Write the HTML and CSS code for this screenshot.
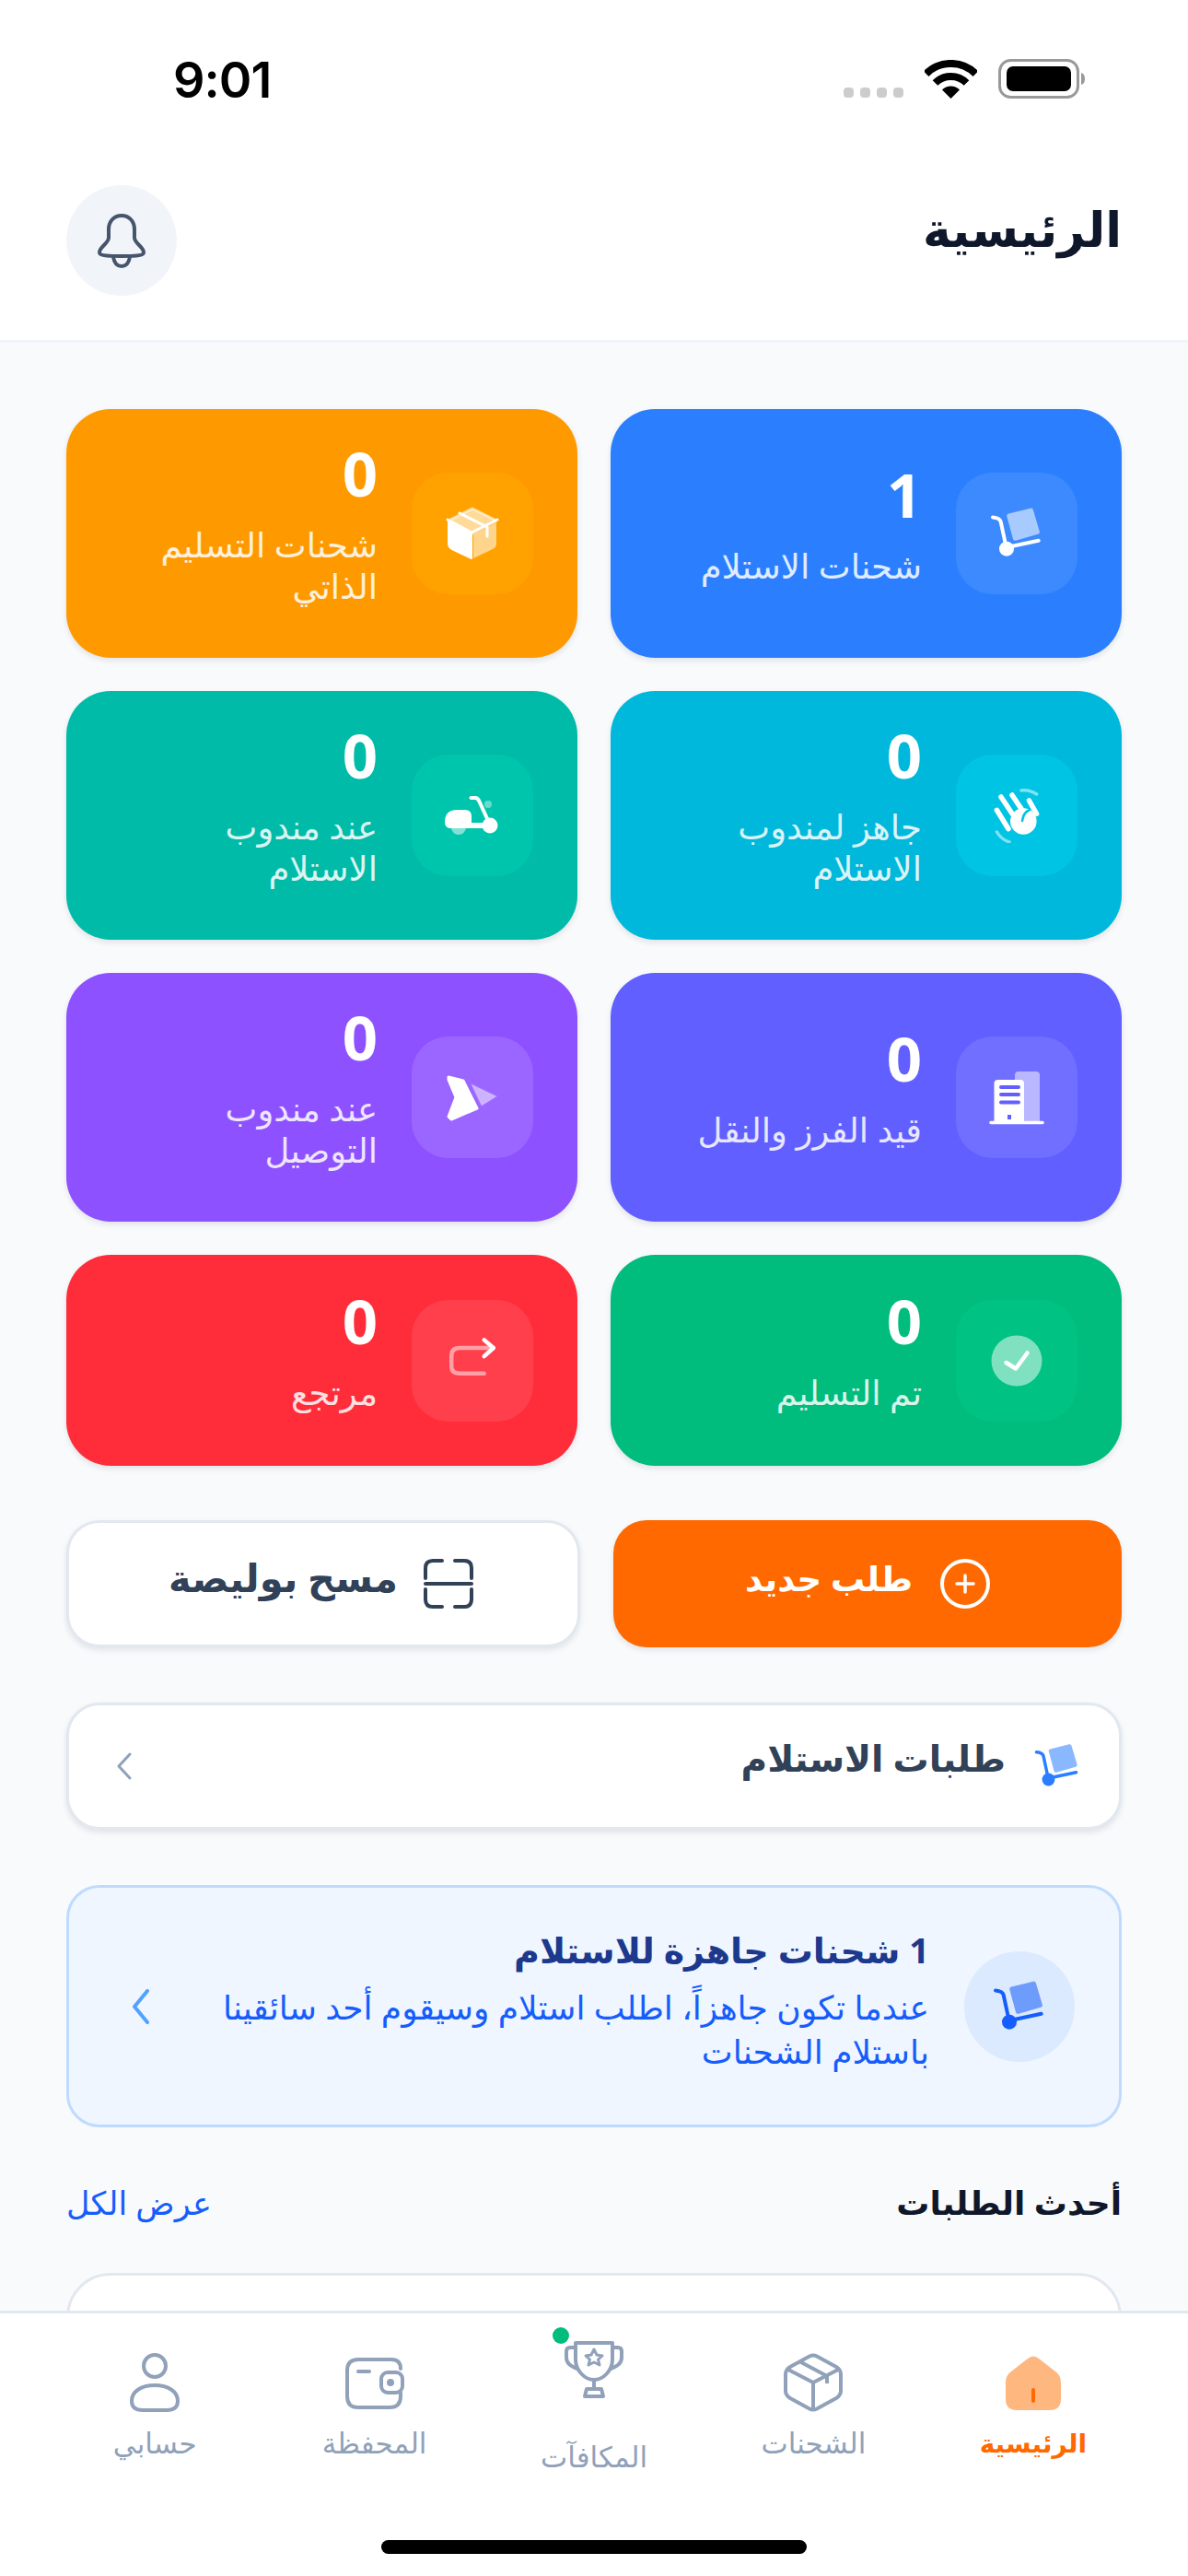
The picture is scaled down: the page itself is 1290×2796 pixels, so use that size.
FILE: index.html
```html
<!DOCTYPE html>
<html lang="ar" dir="rtl">
  <head>
    <meta charset="UTF-8" />
    <meta name="viewport" content="width=device-width, initial-scale=1.0" />
    <title>الرئيسية</title>
    <link rel="stylesheet" href="styles.css">
  </head>
  <body>
    <!-- Shared cart icon -->
    <svg class="defs" width="0" height="0">
      <symbol id="icon-cart" viewBox="0 0 60 60">
        <path class="duo" d="M21.8 11 45.5 5.1 52.4 28.4 28.4 35.3Z" fill="currentColor" stroke="currentColor" stroke-width="5" stroke-linejoin="round" />
        <path d="M4 12.5c4 .4 7.6 1 8.6 4.5L19 46.7M22 44.5l31.7-6.7" fill="none" stroke="currentColor" stroke-width="4" stroke-linecap="round" />
        <circle cx="19" cy="46.7" r="8" fill="currentColor" />
      </symbol>
    </svg>

    <div class="screen">
      <header class="head">
        <div class="status">
          <span class="time">9:01</span>
          <div class="status-icons">
            <div class="signal"><i></i><i></i><i></i><i></i></div>
            <svg width="57" height="42" viewBox="0 0 57 42">
              <path d="M1.6 15.1A38 38 0 0 1 55.4 15.1M11.5 25A24 24 0 0 1 45.5 25" fill="none" stroke="#000" stroke-width="8" />
              <path d="M28.5 42 19 32.5A13.4 13.4 0 0 1 38 32.5Z" fill="#000" />
            </svg>
            <svg width="94" height="43" viewBox="0 0 94 43">
              <rect x="1.5" y="1.5" width="85" height="40" rx="12" fill="none" stroke="#999" stroke-width="3" />
              <rect x="9" y="8" width="70" height="27" rx="7" fill="#000" />
              <path d="M90 15c2.500 .5 4 3 4 6.500s-1.500 6-4 6.500z" fill="#999" />
            </svg>
          </div>
        </div>
        <div class="topbar">
          <h1>الرئيسية</h1>
          <button class="bell">
            <svg width="60" height="60" viewBox="0 0 60 60" fill="none" stroke="#45556c" stroke-width="4">
              <path d="M30 3c-9 0-14 7-14 15v9c0 6-10 10-10 16 0 3 5 4 24 4s24-1 24-4c0-6-10-10-10-16v-9c0-8-5-15-14-15z" />
              <path d="M21 48c1 6 4 10 9 10s8-4 9-10" />
            </svg>
          </button>
        </div>
      </header>

      <main class="content">
        <section class="stats">
          <div class="stat stat-blue">
            <div class="stat-icon">
              <svg width="60" height="60"><use href="#icon-cart" /></svg>
            </div>
            <div class="stat-text">
              <div class="stat-num">1</div>
              <div class="stat-label">شحنات الاستلام</div>
            </div>
          </div>
          <div class="stat stat-amber">
            <div class="stat-icon">
              <svg width="60" height="60" viewBox="0 0 60 60" stroke-linejoin="round">
                <path d="M30 3 56 16 30 30 4 16Z" fill="#fff" fill-opacity=".6" stroke="#fff" stroke-opacity=".6" stroke-width="3" />
                <path d="M4 18 29 31V57L8 47Q4 45 4 41Z" fill="#fff" stroke="#fff" stroke-width="2" />
                <path d="M56 18 31 31V57L52 47Q56 45 56 41Z" fill="#fff" fill-opacity=".55" />
                <path d="M16 8 46 23V33M3 15 29 29 57 15" fill="none" stroke="#fff" stroke-width="3" stroke-linecap="round" />
              </svg>
            </div>
            <div class="stat-text">
              <div class="stat-num">0</div>
              <div class="stat-label">شحنات التسليم الذاتي</div>
            </div>
          </div>
          <div class="stat stat-cyan">
            <div class="stat-icon">
              <svg width="60" height="60" viewBox="0 0 60 60" fill="none" stroke="#fff" stroke-linecap="round">
                <circle cx="37.300" cy="36.500" r="14.300" fill="#fff" stroke="none" />
                <path d="M8.400 24.300 21 44.700M13 10 29 34M25 8 37.300 26.400M43.500 14 51.600 28.400" stroke-width="5.500" />
                <path d="M35 3Q43 1.500 51.600 7M8.400 48Q13 56 22 59" stroke-width="3.500" stroke-opacity=".5" />
                <path d="M44 24Q37 27 36 36" stroke="#00c4e4" stroke-width="2.500" />
              </svg>
            </div>
            <div class="stat-text">
              <div class="stat-num">0</div>
              <div class="stat-label">جاهز لمندوب الاستلام</div>
            </div>
          </div>
          <div class="stat stat-teal">
            <div class="stat-icon">
              <svg width="60" height="60" viewBox="0 0 60 60">
                <circle cx="15" cy="43" r="8" fill="#fff" fill-opacity=".5" />
                <circle cx="47" cy="18" r="4" fill="#fff" fill-opacity=".4" />
                <path d="M0 37Q0 24 14 24H22Q29 24 29 31V38H49V44H6Q0 44 0 37Z" fill="#fff" />
                <path d="M48.500 39 37.500 15Q36 11 33 11H28.500" fill="none" stroke="#fff" stroke-width="4" stroke-linecap="round" />
                <circle cx="49" cy="41" r="8.500" fill="#fff" />
              </svg>
            </div>
            <div class="stat-text">
              <div class="stat-num">0</div>
              <div class="stat-label">عند مندوب الاستلام</div>
            </div>
          </div>
          <div class="stat stat-indigo">
            <div class="stat-icon">
              <svg width="60" height="60" viewBox="0 0 60 60">
                <path d="M28 6Q28 2 32 2H51Q55 2 55 6V57H28Z" fill="#fff" fill-opacity=".5" />
                <path d="M5.500 15Q5.500 11 9.500 11H34Q38 11 38 15V57H5.500Z" fill="#fff" />
                <path d="M13 19H32M13 27H32M13 35.500H32" stroke="#615fff" stroke-width="4" stroke-linecap="round" />
                <path d="M22 54V49" stroke="#615fff" stroke-width="4" />
                <path d="M2 57.500H58" stroke="#fff" stroke-width="3.500" stroke-linecap="round" />
              </svg>
            </div>
            <div class="stat-text">
              <div class="stat-num">0</div>
              <div class="stat-label">قيد الفرز والنقل</div>
            </div>
          </div>
          <div class="stat stat-violet">
            <div class="stat-icon">
              <svg width="60" height="60" viewBox="0 0 60 60" stroke-linejoin="round">
                <path d="M4 8 20 12 35 42 7 54 4 51 12 30 4 11Z" fill="#fff" stroke="#fff" stroke-width="3" />
                <path d="M29 16 56 29 40 39Z" fill="#fff" fill-opacity=".5" stroke="#fff" stroke-opacity=".1" stroke-width="2" />
              </svg>
            </div>
            <div class="stat-text">
              <div class="stat-num">0</div>
              <div class="stat-label">عند مندوب التوصيل</div>
            </div>
          </div>
          <div class="stat stat-green">
            <div class="stat-icon">
              <svg width="60" height="60" viewBox="0 0 60 60" fill="none">
                <circle cx="30" cy="30" r="27.500" fill="#fff" fill-opacity=".5" />
                <path d="M18.500 32 29 38.500 41.500 21.500" stroke="#fff" stroke-width="4.500" stroke-linecap="round" stroke-linejoin="round" />
              </svg>
            </div>
            <div class="stat-text">
              <div class="stat-num">0</div>
              <div class="stat-label">تم التسليم</div>
            </div>
          </div>
          <div class="stat stat-red">
            <div class="stat-icon">
              <svg width="60" height="60" viewBox="0 0 60 60" fill="none" stroke="#fff" stroke-width="4.500" stroke-linecap="round" stroke-linejoin="round">
                <path d="M42.700 43.700H16.200Q7.200 43.700 7.200 36V25Q7.200 16 16.200 16H52.800" stroke-opacity=".5" />
                <path d="M42.700 7.400 52.800 16 42.700 25.200" />
              </svg>
            </div>
            <div class="stat-text">
              <div class="stat-num">0</div>
              <div class="stat-label">مرتجع</div>
            </div>
          </div>
        </section>

        <section class="actions">
          <button class="action action-main">
            <svg width="54" height="54" viewBox="0 0 54 54" fill="none" stroke="#fff" stroke-linecap="round">
              <circle cx="27" cy="27" r="25" stroke-width="4" />
              <path d="M27 18V36M18 27H36" stroke-width="3.500" />
            </svg>
            <span>طلب جديد</span>
          </button>
          <button class="action action-scan">
            <svg width="54" height="54" viewBox="0 0 54 54" fill="none" stroke="#314158" stroke-width="4" stroke-linecap="round">
              <path d="M2 21V10Q2 2 10 2H20M34 2H44Q52 2 52 10V21M2 33V44Q2 52 10 52H20M34 52H44Q52 52 52 44V33" />
              <path d="M2 27H52" />
            </svg>
            <span>مسح بوليصة</span>
          </button>
        </section>

        <a class="pickup-row">
          <svg class="cart-blue" width="52" height="52"><use href="#icon-cart" /></svg>
          <span class="pickup-title">طلبات الاستلام</span>
          <svg class="chev" width="16" height="30" viewBox="0 0 16 30" fill="none" stroke="#90a1b9" stroke-width="3" stroke-linecap="round" stroke-linejoin="round">
            <path d="M14 2 2 15 14 28" />
          </svg>
        </a>

        <section class="banner">
          <div class="banner-icon">
            <svg class="cart-deep" width="60" height="60"><use href="#icon-cart" /></svg>
          </div>
          <div class="banner-text">
            <div class="banner-title">1 شحنات جاهزة للاستلام</div>
            <div class="banner-sub">عندما تكون جاهزاً، اطلب استلام وسيقوم أحد سائقينا باستلام الشحنات</div>
          </div>
          <svg class="chev" width="18" height="38" viewBox="0 0 18 38" fill="none" stroke="#51a2ff" stroke-width="4" stroke-linecap="round" stroke-linejoin="round">
            <path d="M16 2 2 19 16 36" />
          </svg>
        </section>

        <div class="section-head">
          <h2>أحدث الطلبات</h2>
          <a class="see-all">عرض الكل</a>
        </div>

        <div class="order-card"></div>
      </main>

      <nav class="nav">
        <div class="tabs">
          <div class="tab tab-active">
            <svg width="64" height="64" viewBox="-2 -2 64 64">
              <path d="M24 4Q30-1 36 4L54 18Q60 22 60 30V48Q60 60 48 60H12Q0 60 0 48V30Q0 22 6 18Z" fill="#ffb780" />
              <path d="M30 38V50" stroke="#ff6900" stroke-width="4" stroke-linecap="round" />
            </svg>
            <span>الرئيسية</span>
          </div>
          <div class="tab">
            <svg width="64" height="64" viewBox="0 0 64 64" fill="none" stroke="#90a1b9" stroke-width="4" stroke-linejoin="round">
              <path d="M28 3.500Q32 1.500 36 3.500L57 15Q62 18 62 23V41Q62 46 57 49L36 60.500Q32 62.500 28 60.500L7 49Q2 46 2 41V23Q2 18 7 15Z" />
              <path d="M3 17 32 32 61 17M32 32V62M17 9 47 25V33" />
            </svg>
            <span>الشحنات</span>
          </div>
          <div class="tab tab-raised">
            <div class="tab-icon">
              <span class="dot"></span>
              <svg width="64" height="64" viewBox="0 0 64 64" fill="none" stroke="#90a1b9" stroke-width="4" stroke-linejoin="round" stroke-linecap="round">
                <path d="M12 4H52V22C52 34 42 44 32 44S12 34 12 22Z" />
                <path d="M12 9H6Q2 9 2 13V20C2 26 8 30 14 32M52 9H58Q62 9 62 13V20C62 26 56 30 50 32" />
                <path d="M32 44V54M24 54H40L42 62H22Z" />
                <path d="M32 11 35 17 41 18 36.500 22 38 28 32 25 26 28 27.500 22 23 18 29 17Z" stroke-width="3" />
              </svg>
            </div>
            <span>المكافآت</span>
          </div>
          <div class="tab">
            <svg width="64" height="64" viewBox="0 0 64 64" fill="none" stroke="#90a1b9" stroke-width="4" stroke-linecap="round">
              <path d="M60 17V17Q60 7 50 7H14Q2 7 2 19V47Q2 59 14 59H48Q60 59 60 47V43" />
              <rect x="39" y="21" width="23" height="22" rx="7" />
              <circle cx="49" cy="32" r="2" fill="#90a1b9" />
              <path d="M14 20H26" />
            </svg>
            <span>المحفظة</span>
          </div>
          <div class="tab">
            <svg width="64" height="64" viewBox="0 0 64 64" fill="none" stroke="#90a1b9" stroke-width="4">
              <circle cx="32" cy="14" r="12" />
              <path d="M32 35C17 35 7 42 7 52 7 60 13 62 19 62H45C51 62 57 60 57 52 57 42 47 35 32 35Z" />
            </svg>
            <span>حسابي</span>
          </div>
        </div>
        <div class="home-bar"></div>
      </nav>
    </div>
  </body>
</html>
```

FILE: styles.css
```css
* {
  box-sizing: border-box;
}
html,
body {
  margin: 0;
  padding: 0;
}
body {
  font-family: "Noto Sans", "DejaVu Sans", sans-serif;
  background: #fff;
}
.defs {
  position: absolute;
}
.duo {
  opacity: 0.55;
}
.screen {
  width: 1290px;
  height: 2796px;
  display: flex;
  flex-direction: column;
  overflow: hidden;
}

/* header */
.head {
  background: #fff;
  border-bottom: 3px solid #f1f5f9;
  flex: none;
}
.status {
  direction: ltr;
  height: 201px;
  padding: 64px 112px 0 188px;
  display: flex;
  justify-content: space-between;
  align-items: flex-start;
}
.time {
  font-family: Inter, sans-serif;
  font-weight: 600;
  font-size: 54px;
  line-height: 46px;
  letter-spacing: -1px;
  color: #000;
}
.status-icons {
  display: flex;
  align-items: flex-end;
  gap: 23px;
}
.signal {
  display: flex;
  gap: 7px;
  padding-bottom: 1px;
}
.signal i {
  width: 11px;
  height: 11px;
  border-radius: 4px;
  background: #ccc;
}
.topbar {
  display: flex;
  justify-content: space-between;
  align-items: center;
  padding: 0 72px 48px;
}
h1 {
  margin: 0 0 28px;
  font-size: 52px;
  font-weight: 700;
  color: #0f172b;
}
.bell {
  width: 120px;
  height: 120px;
  border: none;
  border-radius: 50%;
  background: #f1f5f9;
  padding: 0;
  display: flex;
  align-items: center;
  justify-content: center;
}

/* main */
.content {
  flex: 1;
  min-height: 0;
  overflow: hidden;
  background: #f8fafc;
  padding: 72px 72px 0;
}
.stats {
  display: grid;
  grid-template-columns: 1fr 1fr;
  grid-template-rows: 270px 270px 270px 229px;
  gap: 36px;
}
.stat {
  border-radius: 48px;
  padding: 0 48px;
  display: flex;
  align-items: center;
  gap: 37px;
  color: #fff;
  box-shadow: 0 3px 6px rgba(15, 23, 43, 0.1);
}
.stat-icon {
  width: 132px;
  height: 132px;
  flex: none;
  border-radius: 40px;
  display: flex;
  align-items: center;
  justify-content: center;
}
.stat-text {
  padding-bottom: 3px;
}
.stat-num {
  font-family: "Open Sans", sans-serif;
  font-size: 67px;
  font-weight: 700;
  line-height: 32px;
  margin-bottom: 39px;
}
.stat-label {
  font-size: 37px;
  line-height: 45px;
  opacity: 0.85;
}
.stat-blue {
  background: #2b7fff;
}
.stat-blue .stat-icon {
  background: #3d8aff;
}
.stat-amber {
  background: #fe9a00;
}
.stat-amber .stat-icon {
  background: #ffa200;
}
.stat-cyan {
  background: #00b8db;
}
.stat-cyan .stat-icon {
  background: #00c4e4;
}
.stat-teal {
  background: #00bba7;
}
.stat-teal .stat-icon {
  background: #00c5ad;
}
.stat-indigo {
  background: #615fff;
}
.stat-indigo .stat-icon {
  background: #716fff;
}
.stat-violet {
  background: #8e51ff;
}
.stat-violet .stat-icon {
  background: #9b66ff;
}
.stat-green {
  background: #00bc7d;
}
.stat-green .stat-icon {
  background: #00c383;
}
.stat-red {
  background: #ff2d3a;
}
.stat-red .stat-icon {
  background: #ff404c;
}

/* action buttons */
.actions {
  display: flex;
  gap: 36px;
  margin-top: 59px;
}
.action {
  height: 138px;
  border-radius: 36px;
  display: flex;
  align-items: center;
  justify-content: center;
  font-family: inherit;
  font-weight: 700;
  box-shadow: 0 3px 6px rgba(15, 23, 43, 0.1);
}
.action span {
  margin-bottom: 14px;
}
.action-main {
  width: 552px;
  font-size: 37px;
  gap: 30px;
  background: #ff6900;
  border: none;
  color: #fff;
}
.action-scan {
  width: 558px;
  font-size: 41.500px;
  gap: 28px;
  padding: 0 11px 0 6px;
  background: #fff;
  border: 3px solid #e2e8f0;
  color: #314158;
}

/* pickup row */
.pickup-row {
  height: 138px;
  margin-top: 60px;
  padding: 0 41px 0 52px;
  display: flex;
  align-items: center;
  gap: 30px;
  background: #fff;
  border: 3px solid #e2e8f0;
  border-radius: 36px;
  box-shadow: 0 3px 6px rgba(15, 23, 43, 0.1);
}
.cart-blue {
  color: #2b7fff;
}
.cart-deep {
  color: #155dfc;
}
.pickup-title {
  flex: 1;
  font-size: 39px;
  font-weight: 700;
  color: #314158;
  margin-bottom: 20px;
}

/* banner */
.banner {
  height: 263px;
  margin-top: 60px;
  padding: 0 48px 0 69px;
  display: flex;
  align-items: center;
  gap: 38px;
  background: #eff6ff;
  border: 3px solid #bedbff;
  border-radius: 36px;
}
.banner-icon {
  width: 120px;
  height: 120px;
  flex: none;
  border-radius: 50%;
  background: #dbeafe;
  display: flex;
  align-items: center;
  justify-content: center;
}
.banner-text {
  flex: 1;
  padding-bottom: 15px;
}
.banner-title {
  font-size: 38px;
  font-weight: 700;
  line-height: 52px;
  color: #1c398e;
  margin-bottom: 13px;
}
.banner-sub {
  font-size: 36px;
  line-height: 48px;
  color: #155dfc;
}

/* latest orders */
.section-head {
  height: 48px;
  margin-top: 60px;
  padding-bottom: 6px;
  display: flex;
  justify-content: space-between;
  align-items: center;
}
h2 {
  margin: 0;
  font-size: 36px;
  font-weight: 700;
  color: #0f172b;
}
.see-all {
  font-size: 35px;
  color: #155dfc;
}
.order-card {
  height: 200px;
  margin-top: 50px;
  background: #fff;
  border: 3px solid #e2e8f0;
  border-radius: 48px;
}

/* bottom nav */
.nav {
  height: 288px;
  flex: none;
  background: #fff;
  border-top: 3px solid #e2e8f0;
}
.tabs {
  height: 246px;
  padding: 0 49px;
  display: grid;
  grid-template-columns: repeat(5, 1fr);
}
.tab {
  padding-top: 43px;
  display: flex;
  flex-direction: column;
  align-items: center;
  gap: 13px;
  font-size: 31px;
  line-height: 40px;
  color: #90a1b9;
}
.tab svg {
  display: block;
}
.tab-active {
  font-size: 28px;
  color: #ff6900;
  font-weight: 700;
}
.tab-raised {
  padding-top: 28px;
  gap: 43px;
}
.tab-icon {
  position: relative;
}
.dot {
  position: absolute;
  top: -13px;
  left: -13px;
  width: 18px;
  height: 18px;
  border-radius: 50%;
  background: #00bc7d;
}
.home-bar {
  width: 462px;
  height: 15px;
  margin: 0 auto;
  border-radius: 8px;
  background: #000;
}
```
